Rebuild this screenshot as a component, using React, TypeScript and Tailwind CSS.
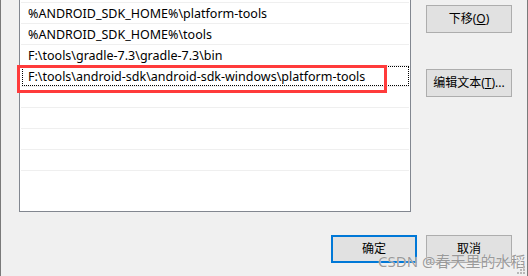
import React from 'react';

const rows: string[] = [
  '%ANDROID_SDK_HOME%\\platform-tools',
  '%ANDROID_SDK_HOME%\\tools',
  'F:\\tools\\gradle-7.3\\gradle-7.3\\bin',
  'F:\\tools\\android-sdk\\android-sdk-windows\\platform-tools',
  '',
  '',
  '',
  '',
  '',
];

const WinButton: React.FC<{ children: React.ReactNode; primary?: boolean; className?: string }> = ({
  children,
  primary,
  className,
}) => (
  <div
    className={
      'w-[86px] h-[28px] flex items-center justify-center bg-[#e1e1e1] text-[12px] text-black ' +
      (primary ? 'border-2 border-[#0078d7] ' : 'border border-[#adadad] ') +
      (className ?? '')
    }
  >
    {children}
  </div>
);

export default function App() {
  return (
    <div
      className="relative w-[528px] h-[276px] overflow-hidden bg-[#f0f0f0] border-l border-r border-[#7a7a7a] flex flex-col"
      style={{ fontFamily: '"Noto Sans", "Noto Sans CJK SC", sans-serif' }}
    >
      <div className="flex">
        {/* list box */}
        <div className="ml-[18px] w-[392px] h-[212px] bg-white border-l border-r border-b border-[#828790] flex flex-col">
          <div className="h-[3px] px-px">
            <div className="h-full border-b border-[#efefef]" />
          </div>
          {rows.map((text, i) => (
            <div key={i} className={i === rows.length - 1 ? 'h-[19px]' : 'h-[21px] px-px'}>
              <div
                className={
                  'relative h-full pl-[7px] pt-[3px] flex items-center text-[12.5px] text-black whitespace-nowrap ' +
                  (i === rows.length - 1 ? '' : 'border-b border-[#efefef]')
                }
              >
                {text}
                {i === 3 && (
                  <div className="absolute left-[1px] right-0 top-0 bottom-0 border border-dotted border-black" />
                )}
              </div>
            </div>
          ))}
        </div>

        {/* side buttons */}
        <div className="ml-[15px] pt-[5px] flex flex-col gap-[36px]">
          <WinButton>
            下移(<span className="underline">O</span>)
          </WinButton>
          <WinButton>
            编辑文本(<span className="underline">T</span>)...
          </WinButton>
        </div>
      </div>

      {/* dialog buttons */}
      <div className="mt-[23px] ml-[330px] flex gap-[9px]">
        <WinButton primary>确定</WinButton>
        <WinButton>取消</WinButton>
      </div>

      {/* red annotation box */}
      <div className="absolute left-[16px] top-[65px] w-[370px] h-[28px] border-[3px] border-[#ff3b3b]" />

      {/* watermark */}
      <div
        className="absolute left-[377px] top-[251px] text-[15px] leading-[20px] text-[#9a9a9a] whitespace-nowrap"
        style={{ textShadow: '0 0 1px #ffffff' }}
      >
        CSDN @春天里的水稻
      </div>

      {/* size grip */}
      <svg className="absolute right-[1px] bottom-[1px]" width="9" height="9" viewBox="0 0 9 9">
        <rect x="6" y="0" width="2" height="2" fill="#b8b8b8" />
        <rect x="3" y="3" width="2" height="2" fill="#b8b8b8" />
        <rect x="6" y="3" width="2" height="2" fill="#b8b8b8" />
        <rect x="0" y="6" width="2" height="2" fill="#b8b8b8" />
        <rect x="3" y="6" width="2" height="2" fill="#b8b8b8" />
        <rect x="6" y="6" width="2" height="2" fill="#b8b8b8" />
      </svg>
    </div>
  );
}
